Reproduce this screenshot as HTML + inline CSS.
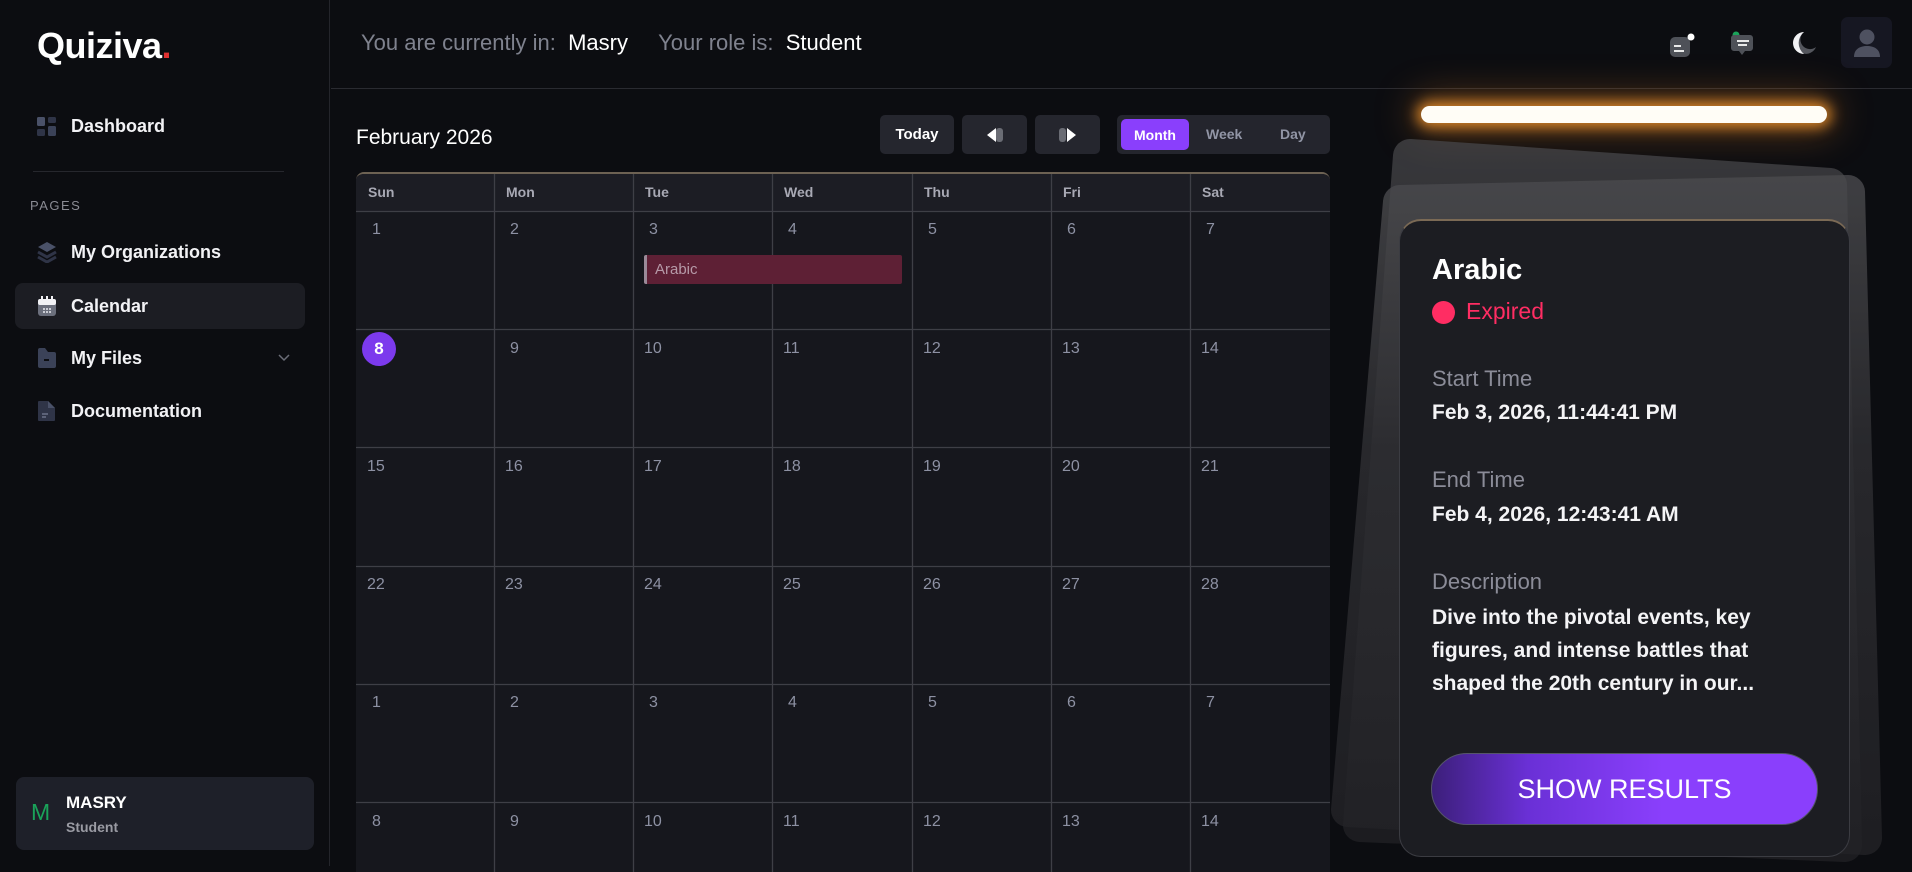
<!DOCTYPE html>
<html><head><meta charset="utf-8"><style>
*{box-sizing:border-box;margin:0;padding:0}
body{width:1912px;height:866px;overflow:hidden;background:#0c0d11;font-family:"Liberation Sans",sans-serif;color:#fff;position:relative}
.abs{position:absolute}
.side{left:0;top:0;width:330px;height:866px;border-right:1px solid #24252b;background:#0c0d11}
.nav{position:absolute;left:37px;font-size:18px;font-weight:bold;display:flex;align-items:center;color:#f2f2f5}
.nav svg{margin-right:14px}
.hdr{left:331px;top:0;right:0;height:89px;border-bottom:1px solid #2a2b31}
.btn{position:absolute;top:115px;height:39px;background:#25262e;border-radius:5px;display:flex;align-items:center;justify-content:center;font-size:15px;font-weight:bold}
.grid{position:absolute;left:356px;top:172px;width:974px;height:700px;background:#16171d;border-top:2px solid #6d6253;border-radius:8px 8px 0 0;overflow:hidden}
.dname{position:absolute;top:0;height:38px;line-height:36px;font-size:14px;font-weight:bold;color:#a8a9b4;padding-left:12px;background:#1c1d24}
.num{position:absolute;font-size:16px;color:#8d91a3}
.lbl{position:absolute;left:1432px;font-size:22px;color:#8b8c98}
.val{position:absolute;left:1432px;font-size:21px;font-weight:bold;color:#f4f4f6}
</style></head><body>
<div class="abs side"></div>
<div class="abs" style="left:37px;top:25px;font-size:36px;font-weight:bold;letter-spacing:-0.5px">Quiziva<span style="color:#e03131">.</span></div>
<div class="nav" style="top:116px"><svg width="20" height="20"><rect x="0" y="0" width="8" height="9" rx="1.5" fill="#4a5168"/><rect x="11" y="0" width="8" height="6" rx="1.5" fill="#2f3447"/><rect x="0" y="12" width="8" height="7" rx="1.5" fill="#2f3447"/><rect x="11" y="9" width="8" height="10" rx="1.5" fill="#3b4258"/></svg>Dashboard</div>
<div class="abs" style="left:33px;top:171px;width:251px;height:1px;background:#26272d"></div>
<div class="abs" style="left:30px;top:198px;font-size:13px;color:#8a8b93;letter-spacing:1.5px">PAGES</div>
<div class="nav" style="top:241px"><svg width="20" height="22"><path d="M10 1L19 6 10 11 1 6Z" fill="#4a5168"/><path d="M1 11l9 5 9-5M1 16l9 5 9-5" stroke="#2f3447" stroke-width="3" fill="none"/></svg>My Organizations</div>
<div class="abs" style="left:15px;top:283px;width:290px;height:46px;background:#1c1d23;border-radius:8px"></div>
<div class="nav" style="top:295px"><svg width="20" height="22"><rect x="1" y="4" width="18" height="17" rx="3" fill="#6b6f7c"/><rect x="1" y="4" width="18" height="6" rx="2" fill="#f2f2f5"/><path d="M5 1v5M10 1v5M15 1v5" stroke="#f2f2f5" stroke-width="2"/><g fill="#c9cbd3"><rect x="6" y="13" width="2" height="2"/><rect x="9" y="13" width="2" height="2"/><rect x="12" y="13" width="2" height="2"/><rect x="6" y="16" width="2" height="2"/><rect x="9" y="16" width="2" height="2"/><rect x="12" y="16" width="2" height="2"/></g></svg>Calendar</div>
<div class="nav" style="top:347px"><svg width="20" height="22"><path d="M1 3a2 2 0 012-2h5l3 4h6a2 2 0 012 2v12a2 2 0 01-2 2H3a2 2 0 01-2-2Z" fill="#3b4258"/><rect x="7" y="12" width="5" height="2" fill="#0c0d11"/></svg>My Files</div>
<svg class="abs" style="left:278px;top:354px" width="12" height="8"><path d="M1 1l5 5 5-5" stroke="#6b6d77" stroke-width="1.5" fill="none"/></svg>
<div class="nav" style="top:400px"><svg width="20" height="22"><path d="M2 1h9l7 7v12a1 1 0 01-1 1H2a1 1 0 01-1-1V2a1 1 0 011-1Z" fill="#2f3447"/><path d="M11 1v7h7" fill="#4a5168"/><path d="M5 14h6M5 17h4" stroke="#6b7288" stroke-width="1.5"/></svg>Documentation</div>
<div class="abs" style="left:16px;top:777px;width:298px;height:73px;background:#1e2029;border-radius:8px"></div>
<div class="abs" style="left:31px;top:799px;font-size:23px;color:#1aa35a;font-weight:500">M</div>
<div class="abs" style="left:66px;top:793px;font-size:17px;font-weight:bold">MASRY</div>
<div class="abs" style="left:66px;top:819px;font-size:14px;font-weight:bold;color:#9a9ba3">Student</div>

<div class="abs hdr"></div>
<div class="abs" style="left:361px;top:30px;font-size:22px;color:#7f828e;white-space:nowrap">You are currently in:&nbsp; <span style="color:#fff">Masry</span>&nbsp;&nbsp;&nbsp;&nbsp; Your role is:&nbsp; <span style="color:#fff">Student</span></div>
<svg class="abs" style="left:1667px;top:30px" width="30" height="30"><rect x="3" y="7" width="20" height="20" rx="5" fill="#4e5158"/><path d="M7 16h7M7 21h10" stroke="#fff" stroke-width="1.8"/><circle cx="24" cy="7" r="3.5" fill="#fff"/></svg>
<svg class="abs" style="left:1729px;top:30px" width="30" height="32"><circle cx="7" cy="5" r="3.5" fill="#1aa35a"/><path d="M5 5h16a3 3 0 013 3v10a3 3 0 01-3 3h-5l-3 4-3-4H5a3 3 0 01-3-3V8a3 3 0 013-3Z" fill="#4e5158"/><path d="M8 11h12M9 15h9" stroke="#fff" stroke-width="1.8"/></svg>
<svg class="abs" style="left:1790px;top:29px" width="30" height="30"><path d="M14 3a11 11 0 1 0 12 15A9 9 0 0 1 14 3Z" fill="#54565d"/><path d="M14 3a11 11 0 0 0 0 22A14 14 0 0 1 14 3Z" fill="#f2f2f5"/></svg>
<div class="abs" style="left:1841px;top:17px;width:51px;height:51px;background:#161722;border-radius:7px"></div>
<svg class="abs" style="left:1851px;top:27px" width="32" height="32"><circle cx="16" cy="10" r="7.5" fill="#4e5160"/><path d="M3 30c0-8 6-11 13-11s13 3 13 11Z" fill="#4e5160"/></svg>

<div class="abs" style="left:356px;top:126px;font-size:21px">February 2026</div>
<div class="btn" style="left:880px;width:74px">Today</div>
<div class="btn" style="left:962px;width:65px"><svg width="24" height="16"><path d="M4 8l9-7v14Z" fill="#fff"/><rect x="13" y="1" width="7" height="14" rx="3" fill="#6a6c74"/></svg></div>
<div class="btn" style="left:1035px;width:65px"><svg width="24" height="16"><rect x="3" y="1" width="7" height="14" rx="3" fill="#6a6c74"/><path d="M20 8l-9-7v14Z" fill="#fff"/></svg></div>
<div class="btn" style="left:1117px;width:213px;background:#24252d"></div>
<div class="btn" style="left:1121px;top:119px;height:31px;width:68px;background:#8a3ffc;font-size:14px">Month</div>
<div class="abs" style="left:1206px;top:126px;font-size:14px;font-weight:bold;color:#9195a5">Week</div>
<div class="abs" style="left:1280px;top:126px;font-size:14px;font-weight:bold;color:#9195a5">Day</div>

<div class="grid">
<div class="dname" style="left:0;width:138px">Sun</div><div class="dname" style="left:138px;width:139px">Mon</div><div class="dname" style="left:277px;width:139px">Tue</div><div class="dname" style="left:416px;width:140px">Wed</div><div class="dname" style="left:556px;width:139px">Thu</div><div class="dname" style="left:695px;width:139px">Fri</div><div class="dname" style="left:834px;width:140px">Sat</div>
<svg class="abs" style="left:0;top:0" width="974" height="700"><g stroke="#3e3f46" stroke-width="1.3"><path d="M0 37.5H974M0 155.5H974M0 273.5H974M0 392.5H974M0 510.5H974M0 628.5H974"/><path d="M138.5 0V700M277.5 0V700M416.5 0V700M556.5 0V700M695.5 0V700M834.5 0V700"/></g></svg>
</div>
<div class="abs" style="left:644px;top:255px;width:258px;height:29px;background:#5e2035;border-left:3px solid #9a8a98;border-radius:2px;font-size:15px;color:#b69aa8;line-height:29px;padding-left:8px">Arabic</div>
<div class="abs" style="left:362px;top:332px;width:34px;height:34px;border-radius:50%;background:#7c3aed;font-weight:bold;font-size:17px;text-align:center;line-height:34px">8</div>
<div id="nums"></div>
<script>
var cols=[356,494,633,772,912,1051,1190],rows=[221,340,458,576,694,813];
var d=[[1,2,3,4,5,6,7],[0,9,10,11,12,13,14],[15,16,17,18,19,20,21],[22,23,24,25,26,27,28],[1,2,3,4,5,6,7],[8,9,10,11,12,13,14]];var h='';
for(var r=0;r<6;r++)for(var c=0;c<7;c++){if(d[r][c])h+='<div class="num" style="left:'+(cols[c]+(d[r][c]<10?16:11))+'px;top:'+rows[r]+'px">'+d[r][c]+'</div>';}
document.getElementById('nums').innerHTML=h;
</script>

<div class="abs" style="left:1421px;top:106px;width:406px;height:17px;border-radius:9px;background:#fffdf6;box-shadow:0 0 14px 4px #e08a2a,0 0 40px 8px rgba(200,110,30,.45)"></div>
<svg class="abs" style="left:1300px;top:130px" width="612" height="736">
<defs><linearGradient id="g1" x1="0" y1="0" x2="0" y2="1"><stop offset="0" stop-color="#4a4a4d"/><stop offset=".4" stop-color="#2f2f33"/><stop offset="1" stop-color="#232327"/></linearGradient></defs>
<path d="M110 26L530 55 545 715 60 695Z" fill="url(#g1)" stroke="url(#g1)" stroke-width="34" stroke-linejoin="round" opacity=".7"/>
<path d="M100 72L548 62 565 708 48 680Z" fill="url(#g1)" stroke="url(#g1)" stroke-width="34" stroke-linejoin="round" opacity=".8"/>
<ellipse cx="175" cy="580" rx="55" ry="120" fill="none" stroke="#6a6a6e" stroke-width="3" opacity=".45"/>
</svg>
<div class="abs" style="left:1399px;top:219px;width:451px;height:638px;background:#1c1d22;border-radius:22px;border:1px solid #3b3c42;border-top:2px solid #7b6a55"></div>
<div class="abs" style="left:1432px;top:254px;font-size:29px;font-weight:bold">Arabic</div>
<div class="abs" style="left:1432px;top:301px;width:23px;height:23px;border-radius:50%;background:#ff2d63"></div>
<div class="abs" style="left:1466px;top:298px;font-size:23px;color:#ff2d63">Expired</div>
<div class="lbl" style="top:366px">Start Time</div>
<div class="val" style="top:401px">Feb 3, 2026, 11:44:41 PM</div>
<div class="lbl" style="top:467px">End Time</div>
<div class="val" style="top:503px">Feb 4, 2026, 12:43:41 AM</div>
<div class="lbl" style="top:569px">Description</div>
<div class="val" style="top:601px;line-height:33px;width:380px">Dive into the pivotal events, key figures, and intense battles that shaped the 20th century in our...</div>
<div class="abs" style="left:1431px;top:753px;width:387px;height:72px;border-radius:36px;background:linear-gradient(90deg,#3c1f7a 0%,#6a30d6 25%,#8a3ffc 60%);border:1px solid #55556a;font-size:27px;text-align:center;line-height:70px;color:#fff">SHOW RESULTS</div>
</body></html>
